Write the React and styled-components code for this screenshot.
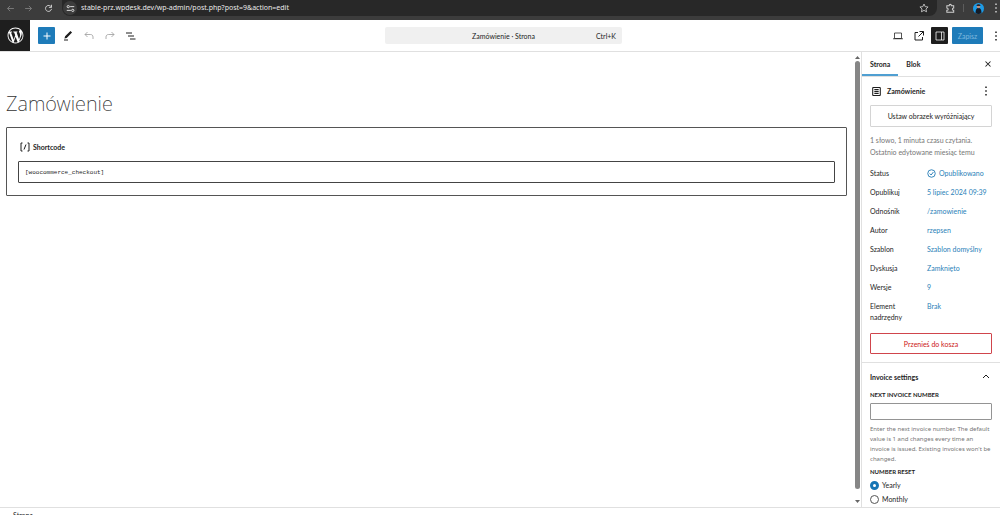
import { useState } from 'react';
import styled, { createGlobalStyle } from 'styled-components';

const GlobalStyle = createGlobalStyle`
  * {
    box-sizing: border-box;
  }

  body {
    margin: 0;
    background: #fff;
    color: #1e1e1e;
    font-family: Lato, 'Noto Sans', sans-serif;
    font-size: 7px;
    line-height: 12px;
  }

  button,
  input {
    font: inherit;
    color: inherit;
  }

  svg {
    display: block;
    flex: none;
  }
`;

const Page = styled.div`
  display: flex;
  flex-direction: column;
  height: 100vh;
  overflow: hidden;
`;

// Browser bar
const BrowserBar = styled.div`
  display: flex;
  flex: none;
  height: 20px;
  padding: 0 0 4px 6px;
  background: #3c3c3c;
  color: #c7c7c7;
`;

const BrowserButton = styled.button`
  display: flex;
  align-items: center;
  justify-content: center;
  flex: none;
  width: ${(props) => props.$width}px;
  height: 16px;
  padding: 0;
  border: 0;
  background: none;
  color: ${(props) => (props.$dim ? '#7c7c7c' : '#d0d0d0')};
`;

const AddressBar = styled.div`
  display: flex;
  align-items: center;
  flex: 1;
  height: 16px;
  margin-left: 8px;
  padding: 0 5px 0 1px;
  border-radius: 0 0 8px 8px;
  background: #282828;
`;

const SiteInfo = styled.button`
  display: flex;
  align-items: center;
  justify-content: center;
  width: 14px;
  height: 14px;
  margin-right: 4px;
  padding: 0;
  border: 0;
  border-radius: 50%;
  background: #3c3c3c;
  color: #e3e3e3;
`;

const AddressInput = styled.input`
  flex: 1;
  padding: 0;
  border: 0;
  outline: 0;
  background: none;
  color: #e8e8e8;
  font-family: 'Noto Sans', sans-serif;
`;

const BarDivider = styled.span`
  width: 1px;
  height: 8px;
  margin-top: 4px;
  background: #5c5c5c;
`;

// Editor header
const Header = styled.header`
  display: flex;
  align-items: center;
  flex: none;
  height: 32px;
  border-bottom: 1px solid #e0e0e0;
`;

const Side = styled.div`
  display: flex;
  align-items: center;
  flex: 1;
  justify-content: ${(props) => (props.$end ? 'flex-end' : 'flex-start')};
  gap: 4px;
`;

const Logo = styled.a`
  display: flex;
  align-items: center;
  justify-content: center;
  width: 30px;
  height: 31px;
  margin-right: 4px;
  background: #1e1e1e;
  color: #fff;
`;

const ToolButton = styled.button`
  display: flex;
  align-items: center;
  justify-content: center;
  width: 17px;
  height: 17px;
  padding: 0;
  border: 0;
  border-radius: 1px;
  background: ${(props) => props.$background || 'none'};
  color: ${(props) => props.$color || '#1e1e1e'};
`;

const SaveButton = styled.button`
  width: 31px;
  height: 17px;
  margin-right: 5px;
  padding: 0;
  border: 0;
  border-radius: 1px;
  background: #1e7bb9;
  color: #7fb9de;
`;

const MoreButton = styled.button`
  display: flex;
  align-items: center;
  justify-content: center;
  width: ${(props) => props.$width || 12}px;
  height: 17px;
  padding: 0;
  border: 0;
  background: none;
`;

const CommandBar = styled.button`
  display: flex;
  align-items: center;
  flex: none;
  width: 237px;
  height: 17px;
  margin-left: 7px;
  padding: 0 6px;
  border: 0;
  border-radius: 2px;
  background: #f0f0f0;

  &::before,
  & > kbd {
    content: '';
    flex: 1;
    font: inherit;
    text-align: right;
  }
`;

// Editor body
const Body = styled.div`
  display: flex;
  flex: 1;
  min-height: 0;
`;

const Canvas = styled.main`
  flex: 1;
  min-width: 0;
  padding: 37px 6px 0;
`;

const Title = styled.h1`
  margin: 0 0 8px;
  color: #333;
  font-family: 'Noto Sans', sans-serif;
  font-size: 20px;
  font-weight: 200;
  line-height: 30px;
`;

const Block = styled.section`
  padding: 12px 11px;
  border: 1px solid #555;
  border-radius: 1px;
`;

const BlockLabel = styled.label`
  display: flex;
  align-items: center;
  gap: 3px;
  height: 14px;
  margin: 0 0 7px 2px;
  font-weight: 700;
`;

const CodeInput = styled.input`
  display: block;
  width: 100%;
  height: 22px;
  padding: 0 6px;
  border: 1px solid #444;
  border-radius: 1px;
  font-family: 'Liberation Mono', monospace;
  font-size: 6px;
  line-height: 20px;
`;

const Scrollbar = styled.div`
  display: flex;
  flex-direction: column;
  align-items: center;
  flex: none;
  width: 8px;
  padding: 3px 0;
  color: #666;
`;

const Thumb = styled.span`
  flex: 1;
  width: 5px;
  margin: 1px 0 10px;
  border-radius: 3px;
  background: #868686;
`;

const Sidebar = styled.aside`
  flex: none;
  width: 139px;
  overflow: hidden;
  border-left: 1px solid #e0e0e0;
`;

const Tabs = styled.div`
  display: flex;
  align-items: stretch;
  height: 25px;
  padding-right: 6px;
  border-bottom: 1px solid #e0e0e0;
`;

const Tab = styled.button`
  padding: 1px 8px 0;
  border: 0;
  border-bottom: 2px solid ${(props) => (props.$active ? '#4f9fd2' : 'transparent')};
  background: none;
  font-weight: 700;
`;

const CloseButton = styled.button`
  display: flex;
  align-items: center;
  justify-content: center;
  width: 12px;
  margin-left: auto;
  padding: 0;
  border: 0;
  background: none;
`;

const Panel = styled.section`
  padding: 0 8px;
`;

const PanelHead = styled.div`
  display: flex;
  align-items: center;
  gap: 4px;
  height: 28px;

  button {
    margin-left: auto;
  }
`;

const PanelTitle = styled.h2`
  margin: 0;
  font-size: 7px;
  font-weight: 700;
`;

const WideButton = styled.button`
  display: block;
  width: 100%;
  height: ${(props) => (props.$danger ? 21 : 22)}px;
  padding: 0;
  border: 1px solid ${(props) => (props.$danger ? '#d0454c' : '#d4d4d4')};
  border-radius: 1px;
  background: #fff;
  color: ${(props) => (props.$danger ? '#cc1818' : '#1e1e1e')};
`;

const Summary = styled.p`
  margin: 7px 0 10px;
  color: #757575;
`;

const Details = styled.dl`
  display: grid;
  grid-template-columns: 50px 1fr;
  column-gap: 7px;
  row-gap: 8px;
  margin: 0 0 10px;
  line-height: 11px;
`;

const Term = styled.dt`
  margin: 0;
`;

const Value = styled.dd`
  margin: 0;
`;

const ValueLink = styled.a`
  display: flex;
  align-items: center;
  gap: 3px;
  color: #2a7fb8;
  text-decoration: none;
  white-space: nowrap;
`;

const InvoicePanel = styled(Panel)`
  margin-top: 8px;
  border-top: 1px solid #e0e0e0;
`;

const Toggle = styled.button`
  display: flex;
  align-items: center;
  justify-content: space-between;
  width: 100%;
  height: 28px;
  padding: 0;
  border: 0;
  background: none;
  font-weight: 700;
`;

const FieldLabel = styled.label`
  display: block;
  height: 12px;
  padding: 0;
  font-size: 6px;
  font-weight: 700;
  line-height: 8px;
  text-transform: uppercase;
`;

const Legend = styled(FieldLabel)`
  height: 10px;
`;

const NumberInput = styled.input`
  display: block;
  width: 100%;
  height: 17px;
  border: 1px solid #949494;
  border-radius: 1px;
`;

const Help = styled.p`
  margin: 4px 0;
  color: #757575;
  font-family: 'Noto Sans', sans-serif;
  font-size: 6px;
  line-height: 10px;
`;

const RadioGroup = styled.fieldset`
  margin: 0;
  padding: 0;
  border: 0;
`;

const RadioLabel = styled.label`
  display: flex;
  align-items: center;
  gap: 3px;
  height: 14px;
`;

const Radio = styled.input`
  appearance: none;
  width: 9px;
  height: 9px;
  margin: 0;
  border: 1px solid #555;
  border-radius: 50%;

  &:checked {
    border: 3px solid #1675b5;
  }
`;

const Footer = styled.footer`
  flex: none;
  height: 8px;
  padding: 1px 13px;
  border-top: 1px solid #e0e0e0;
`;

const details = [
  { label: 'Status', value: 'Opublikowano', icon: true },
  { label: 'Opublikuj', value: '5 lipiec 2024 09:39' },
  { label: 'Odnośnik', value: '/zamowienie' },
  { label: 'Autor', value: 'rzepsen' },
  { label: 'Szablon', value: 'Szablon domyślny' },
  { label: 'Dyskusja', value: 'Zamknięto' },
  { label: 'Wersje', value: '9' },
  { label: 'Element nadrzędny', value: 'Brak' },
];

function Icon({ size = 12, box = 24, stroke = 1.5, children }) {
  return (
    <svg
      width={size}
      height={size}
      viewBox={`0 0 ${box} ${box}`}
      fill="none"
      stroke="currentColor"
      strokeWidth={stroke}
      aria-hidden="true"
    >
      {children}
    </svg>
  );
}

function Dots() {
  return (
    <Icon size={12} stroke={0}>
      <path fill="currentColor" d="M10.5 3h3v3h-3zM10.5 10.5h3v3h-3zM10.5 18h3v3h-3z" />
    </Icon>
  );
}

function WordPressLogo() {
  return (
    <svg width="19" height="19" viewBox="-2 -2 24 24" fill="currentColor" aria-hidden="true">
      <path d="M20 10c0-5.51-4.49-10-10-10C4.48 0 0 4.49 0 10c0 5.52 4.48 10 10 10 5.51 0 10-4.48 10-10zM7.78 15.37L4.37 6.22c.55-.02 1.17-.08 1.17-.08.5-.06.44-1.13-.06-1.11 0 0-1.45.11-2.37.11-.18 0-.37 0-.58-.01C4.12 2.69 6.87 1.11 10 1.11c2.33 0 4.45.87 6.05 2.34-.68-.11-1.65.39-1.65 1.58 0 .74.45 1.36.9 2.1.35.61.55 1.36.55 2.46 0 1.49-1.4 5-1.4 5l-3.03-8.37c.54-.02.82-.17.82-.17.5-.05.44-1.25-.06-1.22 0 0-1.44.12-2.38.12-.87 0-2.33-.12-2.33-.12-.5-.03-.56 1.2-.06 1.22l.92.08 1.26 3.41zM17.41 10c.24-.64.74-1.87.43-4.25.7 1.29 1.05 2.71 1.05 4.25 0 3.29-1.73 6.24-4.4 7.78.97-2.59 1.94-5.2 2.92-7.78zM6.1 18.09C3.12 16.65 1.11 13.53 1.11 10c0-1.3.23-2.48.72-3.59C3.25 10.3 4.67 14.2 6.1 18.09zm4.03-6.63l2.58 6.98c-.86.29-1.76.45-2.71.45-.79 0-1.57-.11-2.29-.33.81-2.38 1.62-4.74 2.42-7.1z" />
    </svg>
  );
}

function Browser() {
  return (
    <BrowserBar>
      <BrowserButton $width={9} $dim aria-label="Back">
        <Icon size={9} stroke={2.5}><path d="M21 12H4M11 5l-7 7 7 7" /></Icon>
      </BrowserButton>
      <BrowserButton $width={27} $dim aria-label="Forward">
        <Icon size={9} stroke={2.5}><path d="M3 12h17M13 5l7 7-7 7" /></Icon>
      </BrowserButton>
      <BrowserButton $width={12} aria-label="Reload">
        <Icon size={9} stroke={2.5}><path d="M20 13a8 8 0 1 1-3-7.500l3 2.500M20 2v7h-7" /></Icon>
      </BrowserButton>
      <AddressBar>
        <SiteInfo aria-label="Site information">
          <Icon size={9} stroke={2.5}>
            <circle cx="6" cy="7" r="3" />
            <path d="M11 7h11M2 17h11" />
            <circle cx="18" cy="17" r="3" />
          </Icon>
        </SiteInfo>
        <AddressInput aria-label="Address" defaultValue="stable-prz.wpdesk.dev/wp-admin/post.php?post=9&action=edit" />
        <BrowserButton $width={16} aria-label="Bookmark">
          <Icon size={10} stroke={2}>
            <path d="M12 2.500l2.900 6.300 6.900.8-5.100 4.700 1.400 6.800-6.100-3.400-6.100 3.400 1.400-6.800-5.100-4.700 6.900-.8z" />
          </Icon>
        </BrowserButton>
      </AddressBar>
      <BrowserButton $width={26} aria-label="Extensions">
        <Icon size={11} stroke={2.2}>
          <path d="M4 6h5c0-4 5-4 5 0h5v5c-4 0-4 5 0 5v4H4v-4c4 0 4-5 0-5z" />
        </Icon>
      </BrowserButton>
      <BarDivider />
      <BrowserButton $width={28} aria-label="Profile">
        <svg width="11" height="11" viewBox="0 0 22 22" aria-hidden="true">
          <circle cx="11" cy="11" r="11" fill="#1d9be6" />
          <path d="M5 20c0-7 2-10 6-10s6 3 6 10c-3 2.500-9 2.500-12 0z" fill="#151b26" />
          <circle cx="11" cy="7" r="3.500" fill="#c58f79" />
          <path d="M7 6c0-5 8-5 8 0z" fill="#2c2328" />
        </svg>
      </BrowserButton>
      <BrowserButton $width={8} aria-label="Browser menu">
        <Dots />
      </BrowserButton>
    </BrowserBar>
  );
}

function EditorHeader() {
  return (
    <Header>
      <Side>
        <Logo href="#" aria-label="WordPress">
          <WordPressLogo />
        </Logo>
        <ToolButton $background="#1e7bb9" $color="#fff" aria-label="Add block">
          <Icon stroke={2}><path d="M12 5v14M5 12h14" /></Icon>
        </ToolButton>
        <ToolButton aria-label="Tools">
          <Icon stroke={0}>
            <path fill="currentColor" d="M20.100 5.100L16.900 2 6.200 12.700l-1.300 4.400 4.500-1.300zM4 20.800h8v-2H4z" />
          </Icon>
        </ToolButton>
        <ToolButton $color="#949494" aria-label="Undo">
          <Icon><path d="M9 4L4 9l5 5M4 9h11c3 0 5 2 5 5v4" /></Icon>
        </ToolButton>
        <ToolButton $color="#949494" aria-label="Redo">
          <Icon><path d="M15 4l5 5-5 5M20 9H9c-3 0-5 2-5 5v4" /></Icon>
        </ToolButton>
        <ToolButton aria-label="Document overview">
          <Icon stroke={2}><path d="M2 6h12M6 12h12M10 18h11" /></Icon>
        </ToolButton>
      </Side>
      <CommandBar>
        <span>Zamówienie · Strona</span>
        <kbd>Ctrl+K</kbd>
      </CommandBar>
      <Side $end>
        <ToolButton aria-label="View">
          <Icon><path d="M5 6h14v11H5zM2 17.500h20" /></Icon>
        </ToolButton>
        <ToolButton aria-label="Preview in new tab">
          <Icon stroke={2}><path d="M10 5H4v15h15v-6M13 3h8v8M21 3L11 13" /></Icon>
        </ToolButton>
        <ToolButton $background="#1e1e1e" $color="#fff" aria-label="Settings">
          <Icon><path d="M4 4h16v16H4zM15 4v16" /></Icon>
        </ToolButton>
        <SaveButton>Zapisz</SaveButton>
        <MoreButton $width={8} aria-label="Options">
          <Dots />
        </MoreButton>
      </Side>
    </Header>
  );
}

function InvoiceSettings() {
  const [reset, setReset] = useState('Yearly');

  return (
    <InvoicePanel>
      <Toggle aria-expanded="true">
        Invoice settings
        <Icon size={12} stroke={2}><path d="M6 14l6-6 6 6" /></Icon>
      </Toggle>
      <FieldLabel htmlFor="invoice-number">Next invoice number</FieldLabel>
      <NumberInput id="invoice-number" />
      <Help>
        Enter the next invoice number. The default value is 1 and changes every time an invoice is issued. Existing
        invoices won't be changed.
      </Help>
      <RadioGroup>
        <Legend as="legend">Number reset</Legend>
        {['Yearly', 'Monthly'].map((option) => (
          <RadioLabel key={option}>
            <Radio type="radio" name="reset" checked={reset === option} onChange={() => setReset(option)} />
            {option}
          </RadioLabel>
        ))}
      </RadioGroup>
    </InvoicePanel>
  );
}

function DetailRow({ item }) {
  return (
    <>
      <Term>{item.label}</Term>
      <Value>
        <ValueLink href="#">
          {item.icon && (
            <Icon size={9} stroke={2.5}>
              <circle cx="12" cy="12" r="10" />
              <path d="M7 12l4 4 6-8" />
            </Icon>
          )}
          {item.value}
        </ValueLink>
      </Value>
    </>
  );
}

function SettingsSidebar() {
  return (
    <Sidebar>
      <Tabs>
        <Tab $active>Strona</Tab>
        <Tab>Blok</Tab>
        <CloseButton aria-label="Close settings">
          <Icon size={10} stroke={2.5}><path d="M6 6l12 12M18 6L6 18" /></Icon>
        </CloseButton>
      </Tabs>
      <Panel>
        <PanelHead>
          <Icon size={13} stroke={2}>
            <rect x="5" y="4.500" width="14" height="15" rx="1" />
            <path d="M8 8.500h8M8 12h8M8 15.500h8" />
          </Icon>
          <PanelTitle>Zamówienie</PanelTitle>
          <MoreButton aria-label="Actions">
            <Dots />
          </MoreButton>
        </PanelHead>
        <WideButton>Ustaw obrazek wyróżniający</WideButton>
        <Summary>
          1 słowo, 1 minuta czasu czytania.
          <br />
          Ostatnio edytowane miesiąc temu
        </Summary>
        <Details>
          {details.map((item) => (
            <DetailRow key={item.label} item={item} />
          ))}
        </Details>
        <WideButton $danger>Przenieś do kosza</WideButton>
      </Panel>
      <InvoiceSettings />
    </Sidebar>
  );
}

export default function App() {
  return (
    <Page>
      <GlobalStyle />
      <Browser />
      <EditorHeader />
      <Body>
        <Canvas>
          <Title>Zamówienie</Title>
          <Block>
            <BlockLabel htmlFor="shortcode">
              <Icon size={10} box={20} stroke={2}>
                <path d="M5 2H2v16h3M15 2h3v16h-3M12 5L8 15" />
              </Icon>
              Shortcode
            </BlockLabel>
            <CodeInput id="shortcode" defaultValue="[woocommerce_checkout]" />
          </Block>
        </Canvas>
        <Scrollbar aria-hidden="true">
          <Icon size={5} box={10} stroke={0}><path fill="currentColor" d="M0 8l5-6 5 6z" /></Icon>
          <Thumb />
          <Icon size={5} box={10} stroke={0}><path fill="currentColor" d="M0 2l5 6 5-6z" /></Icon>
        </Scrollbar>
        <SettingsSidebar />
      </Body>
      <Footer>Strona</Footer>
    </Page>
  );
}
